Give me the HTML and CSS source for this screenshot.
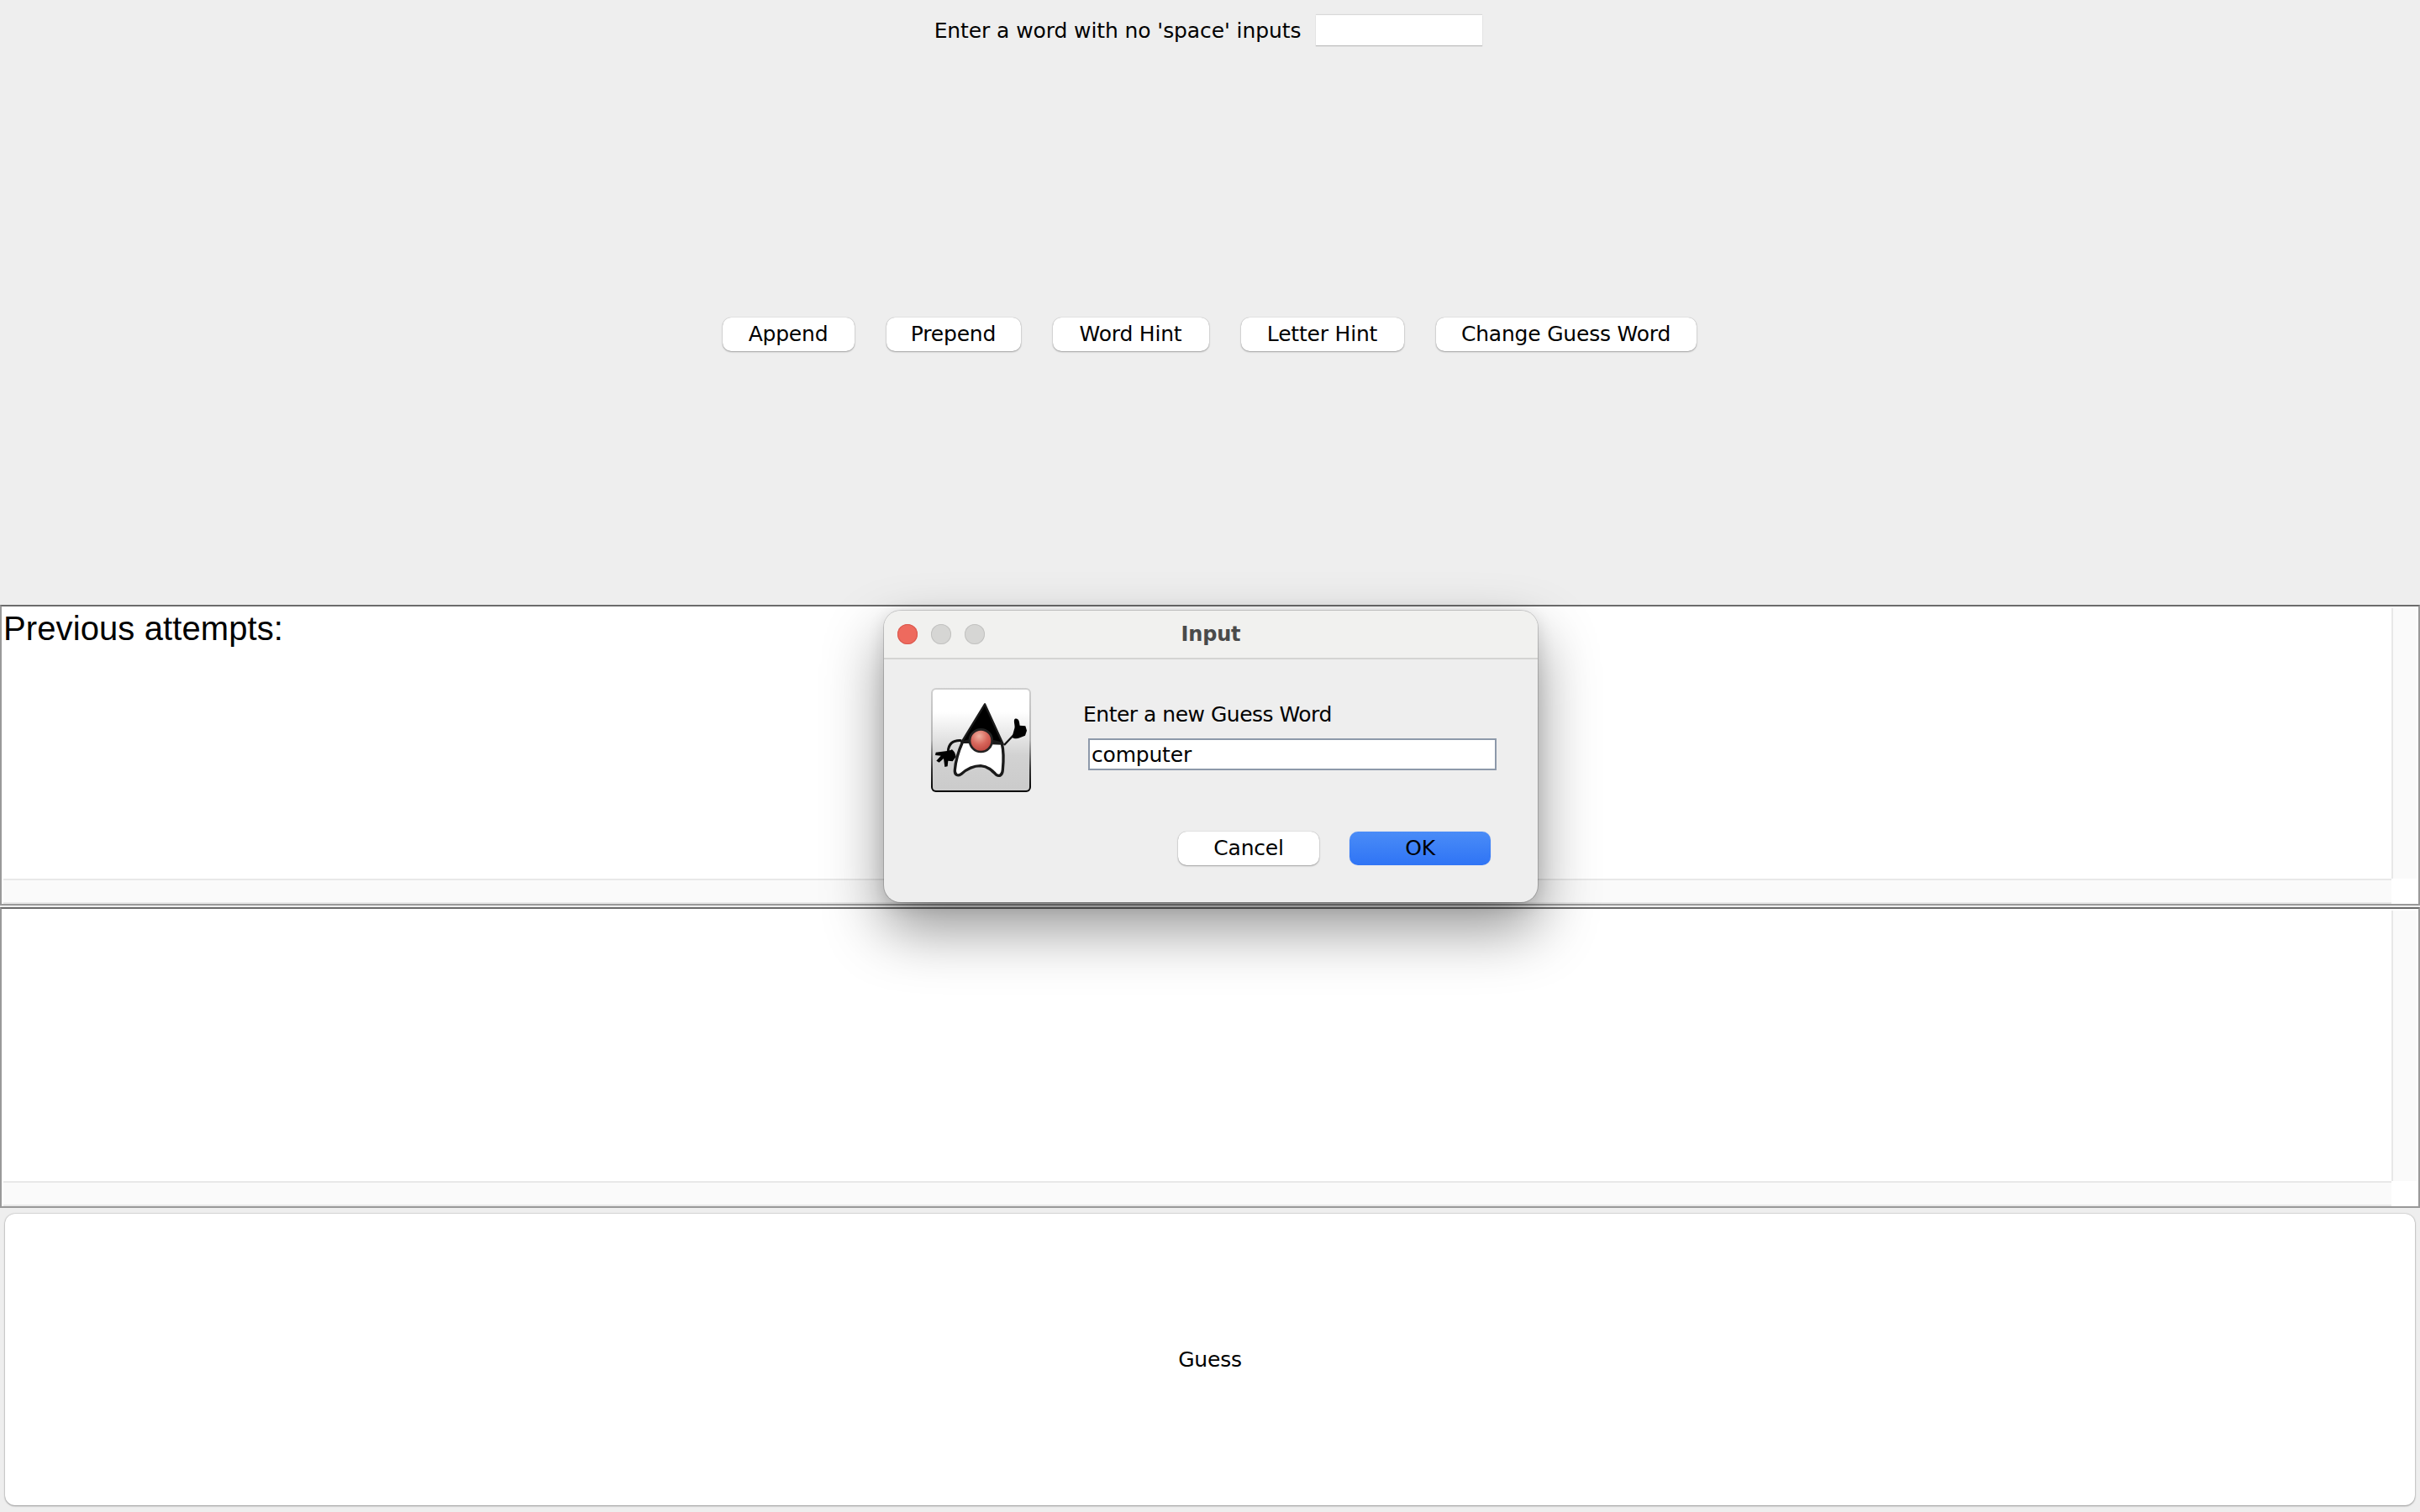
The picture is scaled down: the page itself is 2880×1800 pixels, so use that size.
FILE: index.html
```html
<!DOCTYPE html>
<html lang="en">
<head>
<meta charset="utf-8">
<title>Word Game</title>
<link rel="stylesheet" href="styles.css">
</head>
<body>
<main class="frame">
  <section class="row entry">
    <label class="label" for="word">Enter a word with no 'space' inputs</label>
    <input class="word" id="word" type="text">
  </section>
  <section class="row actions">
    <button class="btn append">Append</button>
    <button class="btn prepend">Prepend</button>
    <button class="btn wordhint">Word Hint</button>
    <button class="btn letterhint">Letter Hint</button>
    <button class="btn change">Change Guess Word</button>
  </section>
  <section class="row">
    <div class="scroll">
      <div class="view"><p class="attempts">Previous attempts:</p></div>
      <div class="vbar"></div>
      <div class="hbar"></div>
      <div class="corner"></div>
    </div>
  </section>
  <section class="row">
    <div class="scroll">
      <div class="view"></div>
      <div class="vbar"></div>
      <div class="hbar"></div>
      <div class="corner"></div>
    </div>
  </section>
  <section class="row guessrow">
    <button class="guess">Guess</button>
  </section>
</main>

<div class="dialog">
  <header class="titlebar">
    <div class="lights">
      <span class="light close"></span>
      <span class="light"></span>
      <span class="light"></span>
    </div>
    <h1 class="title">Input</h1>
  </header>
  <div class="content">
    <div class="icon">
      <svg class="duke" viewBox="55 58 357 372" width="119" height="124" aria-hidden="true">
        <defs>
          <radialGradient id="nose" cx="0.42" cy="0.3" r="0.75">
            <stop offset="0" stop-color="#eeb0a0"/>
            <stop offset="0.5" stop-color="#d8675c"/>
            <stop offset="1" stop-color="#b8403a"/>
          </radialGradient>
        </defs>
        <path d="M168 250 C150 290 142 325 140 352 C139 368 150 374 162 366 C180 350 205 336 232 336 C258 338 272 352 288 368 C300 376 310 368 311 350 C314 320 316 290 308 256 Z" fill="#fff" stroke="#1a1a1a" stroke-width="10" stroke-linejoin="round"/>
        <path d="M247 116 L164 252 C190 240 280 240 312 258 Z" fill="#000" stroke="#1a1a1a" stroke-width="7" stroke-linejoin="round"/>
        <circle cx="233" cy="246" r="40" fill="url(#nose)" stroke="#222" stroke-width="8"/>
        <path d="M164 246 C135 244 118 256 116 284" fill="none" stroke="#111" stroke-width="9"/>
        <path d="M130 278 L118 282 L72 288 L70 298 L90 300 L74 318 L84 324 L100 310 L104 340 L114 338 L116 318 L132 320 L144 304 C142 292 138 284 130 278 Z" fill="#000"/>
        <path d="M316 262 L350 226" fill="none" stroke="#111" stroke-width="7"/>
        <path d="M344 234 L352 206 C357 196 350 182 352 172 C356 164 368 168 370 180 L372 192 L392 194 L397 210 L391 228 L372 236 C362 240 352 240 344 234 Z" fill="#000"/>
      </svg>
    </div>
    <div class="form">
      <label class="prompt" for="newword">Enter a new Guess Word</label>
      <input class="newword" id="newword" type="text" value="computer">
    </div>
  </div>
  <div class="dialog-actions">
    <button class="btn dlg">Cancel</button>
    <button class="btn dlg ok">OK</button>
  </div>
</div>
</body>
</html>
```
FILE: styles.css
```css
* { box-sizing: border-box; }
html, body { margin: 0; padding: 0; }
body {
  width: 2880px;
  height: 1800px;
  overflow: hidden;
  background: #eeeeee;
  color: #000;
  font-family: "DejaVu Sans", sans-serif;
  font-size: 25px;
  letter-spacing: -0.2px;
  position: relative;
}
.frame {
  display: grid;
  grid-template-rows: repeat(5, 360px);
  width: 2880px;
  height: 1800px;
}
.row { min-width: 0; min-height: 0; }
.entry {
  display: flex;
  justify-content: center;
  align-items: flex-start;
  gap: 18px;
  padding: 18px 0 0 0;
  margin-left: -4px;
}
.label { line-height: 38px; white-space: nowrap; letter-spacing: -0.1px; }
.word {
  width: 198px;
  height: 36px;
  border: 0;
  background: #fff;
  box-shadow: 0 -1px 1px #d8d8d8, 0 1px 1px #bbb;
}
.actions {
  display: flex;
  justify-content: center;
  align-items: flex-start;
  gap: 38px;
  padding-top: 18px;
  margin-right: 2px;
}
.btn {
  height: 40px;
  padding: 0 0 2px;
  border: 0;
  border-radius: 10px;
  background: #fff;
  box-shadow: 0 0 1px rgba(0,0,0,.35), 0 1px 2px rgba(0,0,0,.3);
  color: #000;
  font: inherit;
  letter-spacing: inherit;
  white-space: nowrap;
}
.append { width: 157px; }
.prepend { width: 160px; }
.wordhint { width: 186px; }
.letterhint { width: 194px; }
.change { width: 310px; }

.scroll {
  display: grid;
  grid-template-columns: 1fr 30px;
  grid-template-rows: 1fr 30px;
  height: 358px;
  border: 2px solid #999;
  border-top-color: #6b6b6b;
  background: #fff;
  padding: 2px 2px 0 2px;
}
.view { min-width: 0; min-height: 0; margin: -2px 0 0 -2px; }
.attempts {
  margin: 0;
  padding: 3px 0 0 2px;
  font-family: "Liberation Sans", sans-serif;
  font-size: 40px;
  letter-spacing: 0.1px;
  line-height: 46px;
}
.vbar {
  background: #fafafa;
  border-left: 2px solid #e8e8e8;
}
.hbar {
  background: #fafafa;
  border-top: 2px solid #e8e8e8;
  border-bottom: 2px solid #e8e8e8;
}
.corner { background: #fff; }

.guessrow { padding: 5px 6px 8px; }
.guess {
  display: block;
  width: 100%;
  height: 100%;
  border: 0;
  border-radius: 12px;
  background: #fff;
  box-shadow: 0 0 2px rgba(0,0,0,.3), 0 1px 2px rgba(0,0,0,.3);
  font: inherit;
  letter-spacing: inherit;
  color: #000;
}

.dialog {
  position: absolute;
  left: 1052px;
  top: 727px;
  width: 778px;
  height: 347px;
  border-radius: 20px;
  background: #eeeeee;
  box-shadow: 0 0 0 1px rgba(0,0,0,.16), 0 32px 70px rgba(0,0,0,.42), 0 4px 20px rgba(0,0,0,.12);
  overflow: hidden;
}
.titlebar {
  display: grid;
  grid-template-columns: 1fr;
  align-items: center;
  height: 58px;
  background: #f1f1ef;
  border-bottom: 2px solid #d4d4d2;
}
.lights {
  display: flex;
  gap: 16px;
  padding-left: 16px;
  grid-area: 1 / 1;
}
.light {
  width: 24px;
  height: 24px;
  border-radius: 50%;
  background: #d6d6d4;
  box-shadow: inset 0 0 0 1px #c2c2c0;
}
.close { background: #ee6a5e; box-shadow: inset 0 0 0 1px #d9584d; }
.title {
  grid-area: 1 / 1;
  margin: 0;
  text-align: center;
  font-size: 24px;
  font-weight: bold;
  color: #4a4a4a;
}
.content {
  display: flex;
  padding: 34px 0 0 56px;
}
.icon {
  width: 119px;
  height: 124px;
  border: 2px solid transparent;
  border-radius: 6px;
  background:
    linear-gradient(180deg, #fff 0%, #fff 22%, #d2d2d2 65%, #cbcbcb 100%) padding-box,
    linear-gradient(180deg, #cfcfcf 0%, #b4b4b4 50%, #333 78%, #000 100%) border-box;
}
.duke { display: block; margin: -2px; }
.form {
  display: flex;
  flex-direction: column;
  align-items: flex-start;
  padding: 15px 0 0 62px;
}
.prompt { line-height: 34px; white-space: nowrap; letter-spacing: -0.5px; }
.newword {
  width: 486px;
  height: 38px;
  margin: 11px 0 0 6px;
  padding: 0 2px;
  border: 2px solid #8d99aa;
  border-radius: 0;
  background: #fff;
  font: inherit;
  letter-spacing: inherit;
  color: #000;
  outline: 0;
}
.dialog-actions {
  display: flex;
  justify-content: flex-end;
  gap: 36px;
  padding: 47px 56px 0 0;
}
.dlg { width: 168px; }
.ok {
  background: linear-gradient(180deg, #4a8cf7, #2f74f5);
  box-shadow: 0 0 1px rgba(0,60,200,.4);
}
```
